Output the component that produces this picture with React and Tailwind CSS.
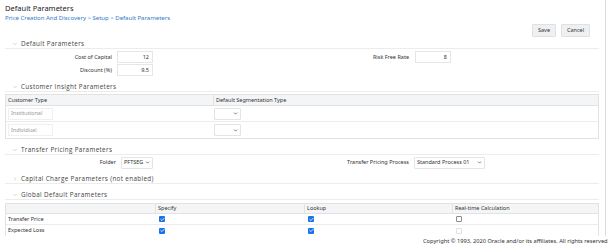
import { ChevronDown, ChevronRight, Check } from 'lucide-react'

const ui = { fontFamily: '"Noto Sans", "Open Sans", sans-serif' }
const hdr = { fontFamily: '"Open Sans", "Noto Sans", sans-serif' }

function Section({ title, open = true, children }) {
  return (
    <div className="mr-[6px]">
      <div className="flex items-center h-[10px] border-b border-[#ececec] pl-[7px] text-[6.3px] text-[#444]" style={hdr}>
        {open ? (
          <ChevronDown className="w-[6px] h-[6px] text-[#999] mr-[3px]" strokeWidth={1.5} />
        ) : (
          <ChevronRight className="w-[6px] h-[6px] text-[#999] mr-[3px]" strokeWidth={1.5} />
        )}
        <span className="tracking-[0.35px]">{title}</span>
      </div>
      {children}
    </div>
  )
}

function Select({ value, w }) {
  return (
    <div
      className="h-[12px] border border-[#e4e4e4] bg-white flex items-center justify-between pl-[2px] pr-[2px] text-[5.5px] text-[#333] rounded-[1px] whitespace-nowrap"
      style={{ width: w }}
    >
      <span>{value}</span>
      <ChevronDown className="w-[5px] h-[5px] shrink-0 text-[#333]" strokeWidth={3} />
    </div>
  )
}

function Box({ checked, disabled }) {
  if (checked) {
    return (
      <span className="inline-flex w-[6px] h-[6px] bg-[#1a73e8] rounded-[1px] items-center justify-center">
        <Check className="w-[5px] h-[5px] text-white" strokeWidth={4} />
      </span>
    )
  }
  return (
    <span
      className={
        'inline-block w-[6px] h-[6px] border rounded-[1px] ' +
        (disabled ? 'border-[#e0e0e0]' : 'border-[#8a8a8a]')
      }
    />
  )
}

export default function App() {
  return (
    <div className="w-[608px] h-[252px] bg-white overflow-hidden relative text-[#333]" style={ui}>
      <div className="h-[236px] overflow-hidden border-r border-[#dcdcdc] mr-[2px]">
        <div className="pl-[5px] pt-[3px]">
          <div className="text-[7.5px] leading-[10px] text-[#222]">Default Parameters</div>
          <div className="text-[6px] leading-[9px] text-[#2f7ac7] mt-[1px]">
            Price Creation And Discovery &gt; Setup &gt; Default Parameters
          </div>
        </div>
        <div className="flex justify-end gap-[5px] pr-[15px] mt-[1px] h-[13px]">
          <button className="w-[24px] h-[13px] bg-[#eef0f2] border border-[#dfe2e5] text-[5.5px] text-[#333] rounded-[1px]">
            Save
          </button>
          <button className="w-[29px] h-[13px] bg-[#eef0f2] border border-[#dfe2e5] text-[5.5px] text-[#333] rounded-[1px]">
            Cancel
          </button>
        </div>

        <div className="mt-[2px] pl-[5px]">
          <Section title="Default Parameters">
            <div className="flex text-[5.5px] mt-[2px]">
              <div className="flex flex-col gap-[1px]">
                <div className="flex items-center h-[12px]">
                  <span className="w-[112px] text-right pr-[5px]">Cost of Capital</span>
                  <span className="w-[36px] h-[12px] border border-[#e6e6e6] flex items-center justify-end pr-[3px]">12</span>
                </div>
                <div className="flex items-center h-[12px]">
                  <span className="w-[112px] text-right pr-[5px]">Discount (%)</span>
                  <span className="w-[36px] h-[12px] border border-[#e6e6e6] flex items-center justify-end pr-[3px]">9.5</span>
                </div>
              </div>
              <div className="flex items-center h-[12px]">
                <span className="w-[262px] text-right pr-[6px]">Risk Free Rate</span>
                <span className="w-[36px] h-[12px] border border-[#e6e6e6] flex items-center justify-end pr-[3px]">8</span>
              </div>
            </div>
          </Section>

          <div className="mt-[6px]">
            <Section title="Customer Insight Parameters">
              <div className="mt-[2px] border border-[#e2e2e2] text-[5.5px]">
                <div className="flex h-[11px] bg-[#f3f5f7] border-b border-[#e2e2e2] items-center">
                  <div className="w-[208px] pl-[2px] border-r border-[#e2e2e2] h-full flex items-center">Customer Type</div>
                  <div className="pl-[2px]">Default Segmentation Type</div>
                </div>
                {['Institutional', 'Individual'].map((t, i) => (
                  <div key={t} className={'flex h-[16px] items-center ' + (i === 0 ? 'border-b border-[#ececec]' : '')}>
                    <div className="w-[208px] pl-[2px]">
                      <div className="w-[45px] h-[12px] border border-[#f0f0f0] flex items-center pl-[2px] text-[#999]">{t}</div>
                    </div>
                    <Select value="" w="27px" />
                  </div>
                ))}
              </div>
            </Section>
          </div>

          <div className="mt-[6px]">
            <Section title="Transfer Pricing Parameters">
              <div className="flex items-center text-[5.5px] h-[13px] mt-[1px]">
                <span className="w-[116px] text-right pr-[5px]">Folder</span>
                <Select value="PFTSEG" w="32px" />
                <span className="w-[261px] text-right pr-[5px]">Transfer Pricing Process</span>
                <Select value="Standard Process 01" w="71px" />
              </div>
            </Section>
          </div>

          <div className="mt-[5px]">
            <Section title="Capital Charge Parameters (not enabled)" open={false} />
          </div>

          <div className="mt-[6px]">
            <Section title="Global Default Parameters">
              <div className="mt-[3px] border border-[#e2e2e2] text-[5.5px]">
                <div className="flex h-[10px] bg-[#f3f5f7] border-b border-[#e2e2e2] items-center">
                  <div className="w-[150px] h-full border-r border-[#e2e2e2]" />
                  <div className="w-[149px] h-full border-r border-[#e2e2e2] pl-[2px] flex items-center">Specify</div>
                  <div className="w-[148px] h-full border-r border-[#e2e2e2] pl-[2px] flex items-center">Lookup</div>
                  <div className="pl-[2px]">Real-time Calculation</div>
                </div>
                {[
                  ['Transfer Price', false],
                  ['Expected Loss', true],
                ].map(([t, dis], i) => (
                  <div key={t} className={'flex h-[11px] items-center ' + (i === 0 ? 'border-b border-[#ececec]' : '')}>
                    <div className="w-[150px] pl-[2px]">{t}</div>
                    <div className="w-[149px] pl-[3px] flex items-center"><Box checked /></div>
                    <div className="w-[148px] pl-[3px] flex items-center"><Box checked /></div>
                    <div className="pl-[3px] flex items-center"><Box disabled={dis} /></div>
                  </div>
                ))}
              </div>
            </Section>
          </div>
        </div>
      </div>
      <div className="absolute left-[423px] top-[237px] whitespace-nowrap text-[5.7px] text-[#333]">
        Copyright © 1993, 2020 Oracle and/or its affiliates. All rights reserved.
      </div>
    </div>
  )
}
